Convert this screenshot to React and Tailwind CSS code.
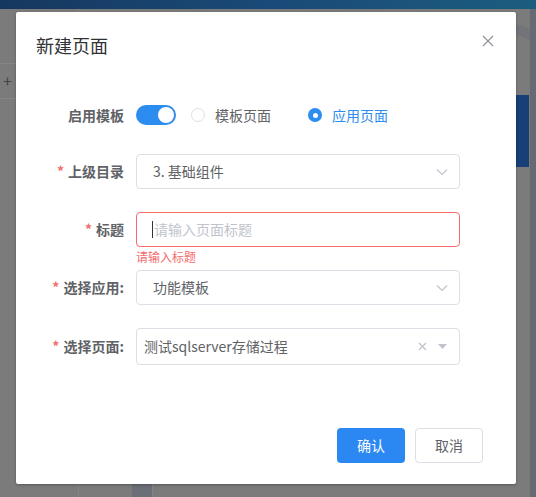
import React from "react";

const FONT = { fontFamily: '"Noto Sans CJK SC", "Noto Sans", sans-serif' };

function Chevron() {
  return (
    <svg width="12" height="8" viewBox="0 0 12 8" className="shrink-0">
      <path d="M1 1.5 L6 6.5 L11 1.5" fill="none" stroke="#c0c4cc" strokeWidth="1.2" />
    </svg>
  );
}

function Label({ text, req }) {
  return (
    <div className="w-[120px] shrink-0 pr-3 text-right text-[14px] font-bold text-[#606266]">
      {req && <span className="mr-1 text-[#f56c6c]">*</span>}
      {text}
    </div>
  );
}

function Select({ value }) {
  return (
    <div className="flex h-[35px] w-[324px] items-center justify-between rounded border border-[#dcdfe6] pl-4 pr-[11px] text-[14px] text-[#606266]">
      <span>{value}</span>
      <Chevron />
    </div>
  );
}

export default function App() {
  return (
    <div className="relative h-[497px] w-[536px] overflow-hidden bg-[#7b7b7b]" style={FONT}>
      {/* backdrop page */}
      <div className="h-[9px] bg-gradient-to-r from-[#15385f] via-[#1a4a78] to-[#1c5c7f]" />
      <div className="absolute left-[78px] top-[9px] h-[488px] w-px bg-[#858585]" />
      <div className="absolute left-0 top-[63px] h-px w-[78px] bg-[#858585]" />
      <div className="absolute left-0 top-[98px] h-px w-[78px] bg-[#858585]" />
      <div className="absolute left-[3px] top-[72px] text-[16px] leading-none text-[#444]">+</div>
      <div className="absolute left-[132px] top-[470px] h-[27px] w-[20px] bg-[#6c6f76]" />
      <div className="absolute left-[152px] top-[470px] h-[27px] w-px bg-[#858585]" />
      <div className="absolute left-[470px] top-[24px] h-[200px] w-[80px] rounded-tr-[40px] border-r-[10px] border-t-[10px] border-[#727479]" />
      <div className="absolute left-[516px] top-[95px] h-[72px] w-[13px] bg-[#173f78]" />
      <div className="absolute left-[530px] top-[9px] h-[488px] w-[6px] bg-[#656a73]" />

      {/* dialog */}
      <div className="absolute left-[16px] top-[12px] flex h-[472px] w-[500px] flex-col rounded-[2px] bg-white shadow-[0_1px_3px_rgba(0,0,0,0.3)]">
        <div className="flex items-start justify-between px-5 pt-[21px]">
          <div className="text-[18px] leading-6 text-[#303133]">新建页面</div>
          <svg width="12" height="12" viewBox="0 0 12 12" className="mr-[2px] mt-[2px]">
            <path d="M1 1 L11 11 M11 1 L1 11" stroke="#909399" strokeWidth="1.2" />
          </svg>
        </div>

        <div className="mt-[40px] flex h-[36px] items-center">
          <Label text="启用模板" />
          <div className="flex h-5 w-10 items-center justify-end rounded-full bg-[#2d8cf0] pr-[2px]">
            <div className="h-4 w-4 rounded-full bg-white" />
          </div>
          <div className="ml-[15px] flex items-center text-[14px] text-[#606266]">
            <div className="h-[14px] w-[14px] rounded-full border border-[#dcdfe6]" />
            <span className="ml-[10px]">模板页面</span>
          </div>
          <div className="ml-[37px] flex items-center text-[14px] text-[#2d8cf0]">
            <div className="flex h-[14px] w-[14px] items-center justify-center rounded-full bg-[#2d8cf0]">
              <div className="h-[5px] w-[5px] rounded-full bg-white" />
            </div>
            <span className="ml-[10px]">应用页面</span>
          </div>
        </div>

        <div className="mt-[21px] flex items-center">
          <Label text="上级目录" req />
          <Select value="3. 基础组件" />
        </div>

        <div className="relative mt-[23px] flex items-center">
          <Label text="标题" req />
          <div className="flex h-[35px] w-[324px] items-center rounded border border-[#f56c6c] pl-[15px] text-[14px] text-[#c0c4cc]">
            <span className="mr-px h-[17px] w-px bg-[#333]" />
            请输入页面标题
          </div>
          <div className="absolute left-[120px] top-[37px] text-[12px] leading-4 text-[#f56c6c]">请输入标题</div>
        </div>

        <div className="mt-[23px] flex items-center">
          <Label text="选择应用:" req />
          <Select value="功能模板" />
        </div>

        <div className="mt-[23px] flex items-center">
          <Label text="选择页面:" req />
          <div className="flex h-[37px] w-[324px] items-center justify-between rounded border border-[#dcdfe6] pl-[7px] pr-[12px] text-[14px] text-[#606266]">
            <span>测试sqlserver存储过程</span>
            <div className="flex items-center gap-[11px]">
              <svg width="9" height="9" viewBox="0 0 9 9">
                <path d="M1 1 L8 8 M8 1 L1 8" stroke="#c0c4cc" strokeWidth="1.4" />
              </svg>
              <svg width="9" height="6" viewBox="0 0 9 6">
                <path d="M0 0 L9 0 L4.5 5 Z" fill="#c0c4cc" />
              </svg>
            </div>
          </div>
        </div>

        <div className="mt-[63px] flex justify-end gap-[10px] pr-[33px]">
          <div className="flex h-[35px] w-[68px] items-center justify-center rounded bg-[#2b88f3] text-[14px] text-white">确认</div>
          <div className="flex h-[35px] w-[68px] items-center justify-center rounded border border-[#dcdfe6] text-[14px] text-[#606266]">取消</div>
        </div>
      </div>
    </div>
  );
}
